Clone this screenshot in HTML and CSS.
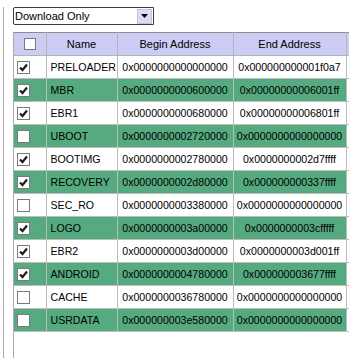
FILE: index.html
```html
<!doctype html>
<html>
<head>
<meta charset="utf-8">
<title>Download</title>
<link rel="stylesheet" href="styles.css">
</head>
<body>
<div class="frame">
    <!-- mode select -->
    <div class="select">
        <span class="selText">Download Only</span>
        <span class="selBtn"><svg width="7" height="4" viewBox="0 0 7 4"><path d="M0 0h7L3.5 4z" fill="#000"/></svg></span>
    </div>

    <div class="grid">
        <table>
            <colgroup>
                <col class="cCheck"><col class="cName"><col class="cBegin"><col class="cEnd"><col class="cRest">
            </colgroup>
            <thead>
                <tr>
                    <th><span class="cb head"></span></th>
                    <th>Name</th>
                    <th>Begin Address</th>
                    <th>End Address</th>
                    <th></th>
                </tr>
            </thead>
            <tbody id="rows"></tbody>
        </table>
    </div>
</div>

<script>
    var parts = [
        ["PRELOADER", "0x0000000000000000", "0x000000000001f0a7", 1],
        ["MBR", "0x0000000000600000", "0x00000000006001ff", 1],
        ["EBR1", "0x0000000000680000", "0x00000000006801ff", 1],
        ["UBOOT", "0x0000000002720000", "0x0000000000000000", 0],
        ["BOOTIMG", "0x0000000002780000", "0x0000000002d7ffff", 1],
        ["RECOVERY", "0x0000000002d80000", "0x000000000337ffff", 1],
        ["SEC_RO", "0x0000000003380000", "0x0000000000000000", 0],
        ["LOGO", "0x0000000003a00000", "0x0000000003cfffff", 1],
        ["EBR2", "0x0000000003d00000", "0x0000000003d001ff", 1],
        ["ANDROID", "0x0000000004780000", "0x000000003677ffff", 1],
        ["CACHE", "0x0000000036780000", "0x0000000000000000", 0],
        ["USRDATA", "0x000000003e580000", "0x0000000000000000", 0]
    ];
    var tick = '<svg width="11" height="11" viewBox="0 0 11 11"><path d="M2 5.5l2.5 2.5L9 2.5" fill="none" stroke="#1e1e1e" stroke-width="2.2"/></svg>';
    var html = "";
    for (var i = 0; i < parts.length; i++) {
        var p = parts[i];
        html += '<tr class="' + (i % 2 ? "green" : "") + '">' +
            '<td class="chk"><span class="cb">' + (p[3] ? tick : "") + '</span></td>' +
            '<td class="name">' + p[0] + '</td>' +
            '<td class="addr">' + p[1] + '</td>' +
            '<td class="addr">' + p[2] + '</td>' +
            '<td class="rest"></td></tr>';
    }
    document.getElementById("rows").innerHTML = html;
</script>
</body>
</html>
```

FILE: styles.css
```css
body{
    margin: 0;
    background: #fff;
    font-family: "Liberation Sans", Arial, sans-serif;
    font-size: 10.6px;
    color: #000;
    overflow: hidden;
}

/* outer panel line */
.frame{
    margin-left: 3px;
    height: 358px;
    border-left: 1px solid #a9a9a9;
    padding-left: 9px;
}

/* combo box */
.select{
    margin-top: 7px;
    width: 138px;
    height: 16px;
    border: 1px solid #3c3c3c;
    border-radius: 2px 0 0 2px;
    display: flex;
    align-items: center;
    justify-content: space-between;
    padding-left: 1px;
    font-size: 11px;
}
.selText{
    line-height: 16px;
}
.selBtn{
    width: 15px;
    height: 15px;
    margin-right: 1px;
    background: #dcdcef;
    border: 1px solid #c4c4d8;
    box-sizing: border-box;
    display: flex;
    align-items: center;
    justify-content: center;
}

/* table */
.grid{
    margin-top: 7px;
    height: 326px;
    border-left: 1px solid #a9a9a9;
    overflow: hidden;
}
table{
    border-collapse: collapse;
    table-layout: fixed;
    width: 400px;
}
.cCheck{ width: 32px; }
.cName{ width: 71px; }
.cBegin{ width: 116px; }
.cEnd{ width: 113px; }
.cRest{ width: 68px; }

th{
    height: 22px;
    padding: 0;
    background: #ccccf4;
    font-weight: normal;
    font-size: 11px;
    border-top: 1px solid #8c8c8c;
    border-right: 1px solid #b4b4b4;
    border-bottom: 1px solid #b4b4b4;
    text-align: center;
}
td{
    height: 22px;
    padding: 0;
    border-right: 1px solid #bcbcbc;
    border-bottom: 1px solid #bcbcbc;
    white-space: nowrap;
    overflow: hidden;
}
tr.green td{
    background: #55aa80;
}
tr.green td.rest{
    background: #fff;
}
.name{
    padding-left: 4px;
}
.addr{
    text-align: center;
}
.chk{
    padding-left: 3px;
}

/* check boxes */
.cb{
    display: block;
    width: 13px;
    height: 13px;
    box-sizing: border-box;
    border: 1px solid #7a7a7a;
    background: #fff;
}
.cb svg{
    display: block;
}
.cb.head{
    width: 12px;
    height: 12px;
    margin: 0 auto;
}
```
